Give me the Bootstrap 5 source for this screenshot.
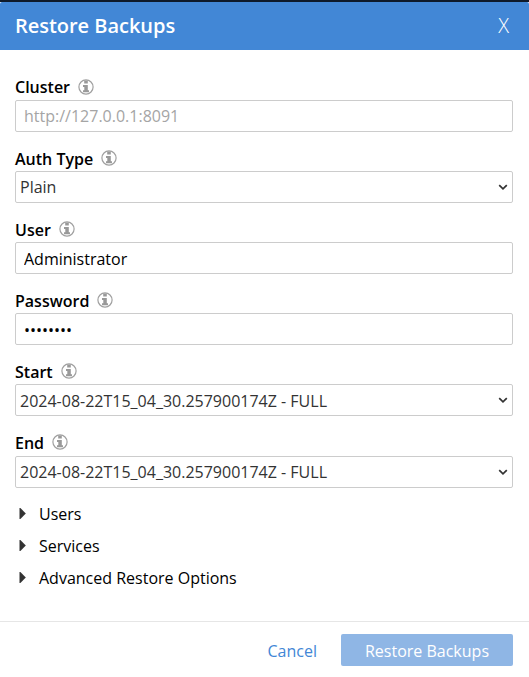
<!DOCTYPE html>
<html lang="en">
<head>
<meta charset="utf-8">
<meta name="viewport" content="width=device-width, initial-scale=1">
<title>Restore Backups</title>
<link href="https://cdn.jsdelivr.net/npm/bootstrap@5.3.0/dist/css/bootstrap.min.css" rel="stylesheet">
<style>
body{font-family:"Open Sans","Noto Sans",sans-serif;font-size:16px;color:#000;background:#fff;height:677px;overflow:hidden;border-top:2px solid #0e1a2b}
.dialog-head{height:48px;background:#4287d6;padding:0 15px;border-radius:2px 2px 0 0}
.dialog-title{font-size:20px;font-weight:600;line-height:48px;letter-spacing:-.03px}
.dialog-x{font-size:20px;font-weight:350;line-height:47px;padding-right:5px}
.dialog-main{padding:25px 16px 0 15px;height:571px}
.field{height:71.12px}
.field label{font-weight:600;line-height:24px}
.field:first-child label{margin-top:-1px}
.field-head{height:25px}
.info{width:16px;height:16px;margin-left:8px;margin-top:-2px}
.field .form-control,.field .form-select{height:32px;border:1px solid #ccc;border-radius:2px;font-size:16px;line-height:22px;color:#000}
.field .form-control{padding:4px 8px}
.field #user,.field #pw{padding-top:5px;padding-bottom:3px}
.field .form-control::placeholder{color:#a5a5a5}
.field .form-select{padding:4px 24px 4px 4px;color:#333;background-position:right 4px center;background-size:10px 8px;background-image:url("data:image/svg+xml,%3Csvg xmlns='http://www.w3.org/2000/svg' viewBox='0 0 10 8'%3E%3Cpath d='M1.2 2.1 5 5.9 8.8 2.1' fill='none' stroke='%23333' stroke-width='1.7'/%3E%3C/svg%3E")}
.field #start{padding-top:5px;padding-bottom:3px}
.folds{margin-top:-3.7px}
.fold{height:32px;padding-left:4px}
.fold svg{width:7px;height:11px;margin:-1px 13px 0 0}
.dialog-foot{height:56px;border-top:1px solid #e6e6e6;padding:1px 16px 0 0}
.dialog-foot .btn{height:32px;padding:0 24px;line-height:34px;border:0;border-radius:2px;font-size:16px;white-space:nowrap}
.dialog-foot .btn-link{color:#4287d6}
.dialog-foot .btn-primary{background:#8fb6e5;opacity:1;color:#fff;width:172px;padding:0}
</style>
</head>
<body>
<svg class="d-none">
<symbol id="i" viewBox="0 0 16 16"><circle cx="8" cy="8" r="7.1" fill="none" stroke="#a0a0a0" stroke-width="1.2"/><path d="M6.2 1.6h3.6v3H6.2zM5 6h4.8v5.3H11v2H5v-2h1.3V7.9H5z" fill="#999"/></symbol>
<symbol id="tri" viewBox="0 0 7 11"><path d="M.5 0H1.4L6.8 5.5 1.4 11H.5z" fill="#333"/></symbol>
</svg>
<header class="dialog-head d-flex justify-content-between text-white"><h1 class="dialog-title mb-0">Restore Backups</h1><span class="dialog-x" role="button">X</span></header>
<main class="dialog-main">
<div class="field"><div class="field-head d-flex align-items-center"><label for="cluster">Cluster</label><svg class="info"><use href="#i"/></svg></div><input id="cluster" class="form-control" placeholder="http://127.0.0.1:8091"></div>
<div class="field"><div class="field-head d-flex align-items-center"><label for="auth">Auth Type</label><svg class="info"><use href="#i"/></svg></div><select id="auth" class="form-select"><option>Plain</option></select></div>
<div class="field"><div class="field-head d-flex align-items-center"><label for="user">User</label><svg class="info"><use href="#i"/></svg></div><input id="user" class="form-control" value="Administrator"></div>
<div class="field"><div class="field-head d-flex align-items-center"><label for="pw">Password</label><svg class="info"><use href="#i"/></svg></div><input id="pw" type="password" class="form-control" value="password"></div>
<div class="field"><div class="field-head d-flex align-items-center"><label for="start">Start</label><svg class="info"><use href="#i"/></svg></div><select id="start" class="form-select"><option>2024-08-22T15_04_30.257900174Z - FULL</option></select></div>
<div class="field"><div class="field-head d-flex align-items-center"><label for="end">End</label><svg class="info"><use href="#i"/></svg></div><select id="end" class="form-select"><option>2024-08-22T15_04_30.257900174Z - FULL</option></select></div>
<section class="folds">
<div class="fold d-flex align-items-center"><svg><use href="#tri"/></svg><span>Users</span></div>
<div class="fold d-flex align-items-center"><svg><use href="#tri"/></svg><span>Services</span></div>
<div class="fold d-flex align-items-center"><svg><use href="#tri"/></svg><span>Advanced Restore Options</span></div>
</section>
</main>
<footer class="dialog-foot d-flex align-items-center justify-content-end"><button class="btn btn-link text-decoration-none">Cancel</button><button class="btn btn-primary" disabled>Restore Backups</button></footer>
<script src="https://cdn.jsdelivr.net/npm/bootstrap@5.3.0/dist/js/bootstrap.bundle.min.js"></script>
</body>
</html>
